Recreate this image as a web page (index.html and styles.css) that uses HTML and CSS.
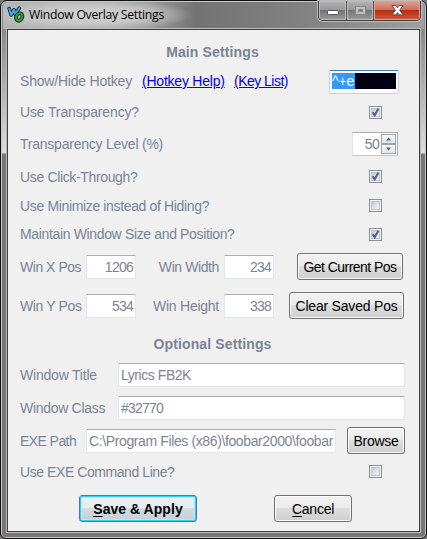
FILE: index.html
```
<!DOCTYPE html>
<html lang="en">
<head>
<meta charset="utf-8">
<title>Window Overlay Settings</title>
<link rel="stylesheet" href="styles.css">
</head>
<body>
<svg width="0" height="0" class="defs">
  <linearGradient id="box" x1="0" y1="0" x2="1" y2="1"><stop offset="0" stop-color="#c3c8d0"/><stop offset="1" stop-color="#f8f8f8"/></linearGradient>
  <symbol id="off" viewBox="0 0 13 13">
    <rect x=".5" y=".5" width="12" height="12" fill="#f4f4f4" stroke="#8e8f8f"/>
    <rect x="2.5" y="2.5" width="8" height="8" fill="url(#box)" stroke="#c0c4ca"/>
  </symbol>
  <symbol id="on" viewBox="0 0 13 13">
    <use href="#off"/>
    <path d="M3.7 6.2 5.7 9.3 9.3 2.8" fill="none" stroke="#4a5f97" stroke-width="2"/>
  </symbol>
</svg>
<div class="window">
  <header class="titlebar">
    <svg class="logo" width="18" height="18" viewBox="0 0 18 18" fill="none" stroke-linecap="round" stroke-linejoin="round">
      <path d="M2.2 3.5 4.2 10 7 4.8 8.3 9.3 12.2 3.2" stroke="#14202c" stroke-width="3.6"/>
      <path d="M2.2 3.5 4.2 10 7 4.8 8.3 9.3 12.2 3.2" stroke="#45adf4" stroke-width="1.9"/>
      <ellipse cx="12.200" cy="12" rx="3" ry="3.8" transform="rotate(25 12.200 12)" stroke="#0b240b" stroke-width="3.800"/>
      <ellipse cx="12.200" cy="12" rx="3" ry="3.8" transform="rotate(25 12.200 12)" stroke="#36a536" stroke-width="2"/>
    </svg>
    <h1 class="caption">Window Overlay Settings</h1>
    <div class="controls">
      <span class="ctl"><svg width="28" height="18"><rect x="8.5" y="9.5" width="11" height="4" rx="1" fill="#fff" stroke="#505462"/></svg></span>
      <span class="ctl"><svg width="27" height="18"><path d="M8.5 5.5h10v8h-10zM11.5 8.5h4v2h-4z" fill="#bdbdbd" fill-rule="evenodd" stroke="#888"/></svg></span>
      <span class="ctl close"><svg width="46" height="18"><path d="M18 4.500h4l1.500 2.200 1.500-2.200h4l-3.300 4.700 3.300 4.700h-4l-1.500-2.200-1.500 2.200h-4l3.300-4.700z" fill="#fff" stroke="#574957"/></svg></span>
    </div>
  </header>
  <main class="client">
    <h2 class="row heading">Main Settings</h2>
    <div class="row hotkey"><span class="lead">Show/Hide Hotkey</span><a class="help">(Hotkey Help)</a><a class="keys">(Key List)</a><span class="keybox push"><span class="keyfill"><span class="selected">^+e</span></span></span></div>
    <div class="row transparency"><span class="wide">Use Transparency?</span><svg class="check push" width="13" height="13"><use href="#on"/></svg></div>
    <div class="row level"><span class="lead-lv">Transparency Level (%)</span>
      <span class="spinner push"><span class="amount">50</span><span class="arrows"><i><svg width="13" height="8"><path d="M4 5.5h5L6.500 2.500z" fill="#4a5f97"/></svg></i><i><svg width="13" height="8"><path d="M4 2.500h5L6.500 5.500z" fill="#4a5f97"/></svg></i></span></span></div>
    <div class="row click"><span>Use Click-Through?</span><svg class="check push" width="13" height="13"><use href="#on"/></svg></div>
    <div class="row minimize"><span>Use Minimize instead of Hiding?</span><svg class="check push" width="13" height="13"><use href="#off"/></svg></div>
    <div class="row maintain"><span>Maintain Window Size and Position?</span><svg class="check push" width="13" height="13"><use href="#on"/></svg></div>
    <div class="row pos-x"><span class="pos-label tight">Win X Pos</span><span class="field num">1206</span><span class="size-label">Win Width</span><span class="field num">234</span><button class="btn get push">Get Current Pos</button></div>
    <div class="row pos-y"><span class="pos-label">Win Y Pos</span><span class="field num">534</span><span class="size-label">Win Height</span><span class="field num">338</span><button class="btn clear push">Clear Saved Pos</button></div>
    <h2 class="row heading optional">Optional Settings</h2>
    <div class="row title"><span class="text-label loose">Window Title</span><span class="field text">Lyrics FB2K</span></div>
    <div class="row class"><span class="text-label">Window Class</span><span class="field text digits">#32770</span></div>
    <div class="row exe"><span class="path-label">EXE Path</span><span class="field path">C:\Program Files (x86)\foobar2000\foobar</span><button class="btn browse push">Browse</button></div>
    <div class="row command"><span class="cmd-label">Use EXE Command Line?</span><svg class="check push" width="13" height="13"><use href="#off"/></svg></div>
    <div class="actions"><button class="btn save"><u>S</u>ave &amp; Apply</button><button class="btn cancel"><u>C</u>ancel</button></div>
  </main>
</div>
</body>
</html>
```
FILE: styles.css
```
* { box-sizing: border-box; }
body { margin: 0; background: #777; overflow: hidden; }
.defs { position: absolute; }
.window {
  width: 427px; height: 539px; padding: 1px 6px 5px 5px;
  border: 1px solid #111; border-radius: 7px 7px 6px 6px;
  box-shadow: inset 0 0 0 1px #c8c8c8;
  background: linear-gradient(#8a8a8a 0, #898989 28px, #a3a1a1 65px, #dedcdc 152px, #777575 153px, #777575 100%);
  font: 14px/16px "Liberation Sans", Arial, sans-serif; letter-spacing: -.35px; color: #7b8494;
}
.titlebar {
  height: 27px; display: flex; align-items: flex-start; margin: 0 -4px 0 -3px; padding-left: 4px; border-radius: 5px 5px 0 0;
  background: radial-gradient(ellipse 105px 17px at 84px 13px, #d2d2d2 0, #c6c6c6 55%, transparent 100%), linear-gradient(90deg, #b4b4b4 0, #999 35%, #737373 46%, #828282 72%, #a0a0a0 100%);
}
.logo { margin-top: 3px; }
.caption { margin: 4px 0 0 4px; font: 12.2px/18px "Open Sans", sans-serif; letter-spacing: -.26px; color: #000; white-space: pre; }
.controls { display: flex; margin: -1px 3px 0 auto; height: 20px; border: 1px solid #3d3d3d; border-top: 0; border-radius: 0 0 5px 5px; overflow: hidden; box-shadow: 0 0 0 1px #bcbcbc; }
.ctl { width: 28px; background: linear-gradient(#b4b4b4 0, #999 45%, #747474 50%, #9b9b9b 100%); box-shadow: inset 0 0 0 1px #bbb; border-right: 1px solid #555; }
.ctl + .ctl { width: 27px; }
.ctl svg { display: block; }
.ctl + .ctl.close { width: 46px; border: 0; background: linear-gradient(#dfa093 0, #d0705c 45%, #b82c12 50%, #d6593a 100%); box-shadow: inset 0 0 0 1px #dba397; }
.client {
  width: 413px; height: 503px; border: 1px solid #3c3c3c; box-shadow: 0 0 0 1px #bdbdbd;
  margin-left: 1px; background: #f0f0f0; padding: 9px 14px 3px 12px; display: flex; flex-direction: column;
}
.row { display: flex; align-items: center; flex: none; margin: 0; white-space: pre; }
.push { margin-left: auto; flex: none; }
.check { margin-right: 23px; display: block; }
.heading { height: 26px; justify-content: center; font: bold 14px/16px "Liberation Sans", Arial, sans-serif; letter-spacing: .13px; }
.hotkey { height: 32px; padding-right: 6px; }
.lead { width: 122px; letter-spacing: -.2px; }
.hotkey a { color: #0000f0; text-decoration: underline; text-underline-offset: 1px; }
.help { width: 83px; margin-right: 9px; letter-spacing: -.22px; }
.keys { letter-spacing: -.52px; }
.keybox { width: 70px; height: 24px; margin-top: 2px; border: 1px solid #b5d6ea; border-top-color: #3d7bad; border-radius: 2px; background: #fff; padding: 2px; }
.keyfill { display: block; width: 64px; height: 16px; background: #000015; }
.selected { display: block; width: 23px; height: 16px; background: #39f; color: #fff; letter-spacing: -.1px; line-height: 17px; }
.transparency { height: 30px; }
.wide { letter-spacing: -.14px; }
.level { height: 34px; padding-right: 7px; }
.lead-lv { letter-spacing: -.23px; }
.spinner { width: 46px; height: 24px; display: flex; justify-content: flex-end; background: #fff; border: 1px solid #abadb3; border-left-color: #e2e3ea; border-bottom-color: #c5c6cc; padding: 1px; }
.amount { line-height: 21px; margin-right: 2px; letter-spacing: -.7px; }
.arrows { width: 15px; height: 20px; display: grid; }
.arrows i { border: 1px solid #a2a3ab; height: 10px; background: linear-gradient(#f8f8f8, #e4e4e4); }
.arrows svg { display: block; }
.click { height: 31px; }
.minimize { height: 27px; }
.maintain { height: 30px; }
.pos-x { height: 35px; padding-right: 2px; }
.pos-y { height: 43px; padding-right: 1px; }
.pos-label { width: 66px; }
.tight { letter-spacing: -.47px; }
.size-label { width: 84px; text-align: right; margin-right: 4px; padding-right: 1px; letter-spacing: -.25px; }
.pos-x .size-label { letter-spacing: -.4px; }
.field { height: 24px; background: #fff; border: 1px solid #e2e5ec; border-top-color: #abadb3; border-radius: 1px; line-height: 22px; padding: 0 2px; overflow: hidden; }
.num { width: 50px; text-align: right; letter-spacing: -.75px; flex: none; }
.btn { height: 27px; padding: 0; border: 1px solid #707070; border-radius: 3px; background: linear-gradient(#f2f2f2 0, #ebebeb 49%, #ddd 50%, #cfcfcf 100%); box-shadow: inset 0 0 0 1px #fafafa; font: 14px/16px "Liberation Sans", Arial, sans-serif; color: #000; white-space: pre; flex: none; }
.get { width: 106px; letter-spacing: -.54px; }
.clear { width: 115px; letter-spacing: -.2px; }
.optional { height: 34px; }
.title { height: 26px; margin-top: 1px; }
.class { height: 40px; }
.text-label { width: 98px; letter-spacing: -.3px; }
.loose { letter-spacing: -.2px; }
.text { width: 287px; letter-spacing: -.45px; }
.digits { letter-spacing: -.78px; }
.exe { height: 25px; }
.path-label { width: 66px; letter-spacing: -.57px; }
.path { width: 250px; letter-spacing: -.38px; }
.browse { width: 58px; letter-spacing: -.28px; }
.command { height: 37px; }
.cmd-label { letter-spacing: -.43px; }
.actions { display: flex; gap: 77px; padding: 5px 0 0 59px; }
.save { width: 118px; font: bold 14px/16px "Liberation Sans", Arial, sans-serif; letter-spacing: .04px; border-color: #3c7fb1; box-shadow: inset 0 0 0 1px #35cdf3, inset 0 0 0 2px #b8e8f6; background: linear-gradient(#edf1f3 0, #e5ebee 49%, #d2dce1 50%, #c2d0d6 100%); }
.cancel { width: 78px; letter-spacing: -.26px; }
u { text-underline-offset: 2px; }
```
